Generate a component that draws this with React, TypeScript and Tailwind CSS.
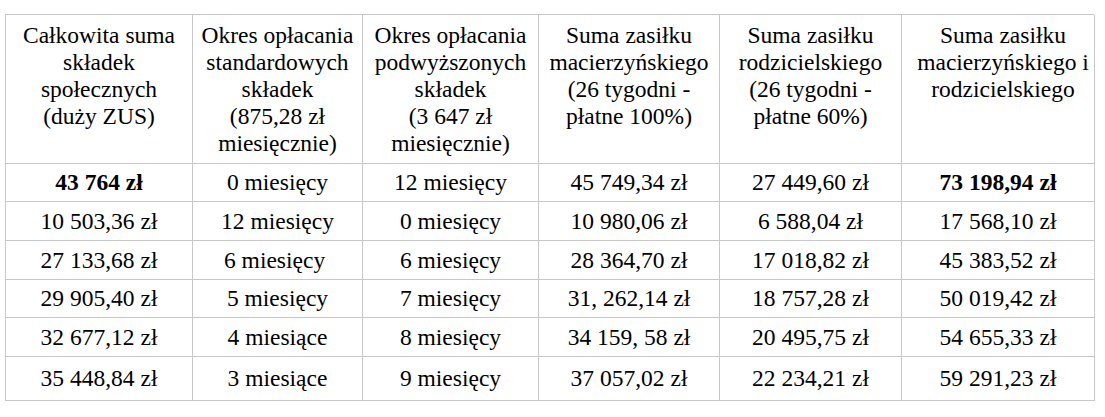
const headers = [
  ['Całkowita suma', 'składek', 'społecznych', '(duży ZUS)'],
  ['Okres opłacania', 'standardowych', 'składek', '(875,28 zł', 'miesięcznie)'],
  ['Okres opłacania', 'podwyższonych', 'składek', '(3 647 zł', 'miesięcznie)'],
  ['Suma zasiłku', 'macierzyńskiego', '(26 tygodni -', 'płatne 100%)'],
  ['Suma zasiłku', 'rodzicielskiego', '(26 tygodni -', 'płatne 60%)'],
  ['Suma zasiłku', 'macierzyńskiego i', 'rodzicielskiego'],
]

const rows = [
  ['43 764 zł', '0 miesięcy', '12 miesięcy', '45 749,34 zł', '27 449,60 zł', '73 198,94 zł'],
  ['10 503,36 zł', '12 miesięcy', '0 miesięcy', '10 980,06 zł', '6 588,04 zł', '17 568,10 zł'],
  ['27 133,68 zł', '6 miesięcy\u00a0', '6 miesięcy', '28 364,70 zł', '17 018,82 zł', '45 383,52 zł'],
  ['29 905,40 zł', '5 miesięcy', '7 miesięcy', '31, 262,14 zł', '18 757,28 zł', '50 019,42 zł'],
  ['32 677,12 zł', '4 miesiące', '8 miesięcy', '34 159, 58 zł', '20 495,75 zł', '54 655,33 zł'],
  ['35 448,84 zł', '3 miesiące', '9 miesięcy', '37 057,02 zł', '22 234,21 zł', '59 291,23 zł'],
]

const rowHeights = ['h-[38px]', 'h-[39px]', 'h-[39px]', 'h-[38px]', 'h-[39px]', 'h-[44px]']

export default function App() {
  return (
    <div className="w-[1105px] pl-[5px] pt-[14px] font-['Times_New_Roman']">
      <div className="grid w-[1089px] grid-cols-[187px_170px_176px_181px_182px_193px] border-l border-t border-[#c8c8c8]">
        {headers.map((lines, i) => (
          <div
            key={i}
            className={`h-[149px] whitespace-nowrap border-b border-r border-[#c8c8c8] pt-[7px] text-center ${i === 5 ? 'pl-[10px]' : ''}`}
          >
            {lines.map((l, j) => (
              <div key={j} className="font-['Times_New_Roman'] text-[23.5px] leading-[27px]">
                {l}
              </div>
            ))}
          </div>
        ))}
        {rows.map((r, i) =>
          r.map((c, j) => (
            <div
              key={`${i}-${j}`}
              className={`flex ${rowHeights[i]} items-center justify-center border-b border-r border-[#c8c8c8]`}
            >
              <span className={`whitespace-pre font-['Times_New_Roman'] text-[23.5px] leading-[27px] ${i === 0 && (j === 0 || j === 5) ? 'font-bold' : ''}`}>
                {c}
              </span>
            </div>
          ))
        )}
      </div>
    </div>
  )
}
